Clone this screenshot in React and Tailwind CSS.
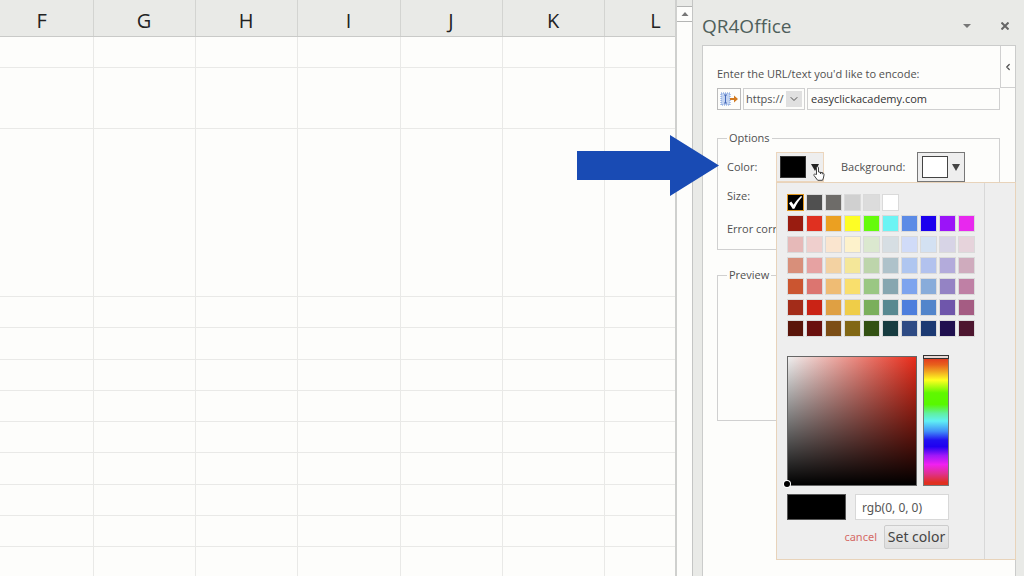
import React, { useState } from 'react';
import { ChevronDown, ChevronLeft } from 'lucide-react';

const columns = [
  { name: 'F', width: 'w-[102px]' },
  { name: 'G', width: 'w-[102px]' },
  { name: 'H', width: 'w-[102px]' },
  { name: 'I', width: 'w-[103px]' },
  { name: 'J', width: 'w-[102px]' },
  { name: 'K', width: 'w-[102px]' },
  { name: 'L', width: 'w-[103px]' },
];

const rows = [
  'h-[31px]', 'h-[61px]', 'h-[168px]', 'h-[31px]', 'h-[32px]', 'h-[31px]', 'h-[31px]',
  'h-[31px]', 'h-[32px]', 'h-[31px]', 'h-[31px]', 'h-[31px]',
];

const greys = ['#000000', '#505050', '#6e6c69', '#d0d0d0', '#dcdcdc', '#ffffff'];

const palette = [
  ['#991c10', '#e03020', '#eba021', '#fdfd25', '#65fb0c', '#6cf4f4', '#5c8be6', '#1b00ee', '#9b14f8', '#e828ee'],
  ['#e6b9b8', '#efcfcd', '#fae5cf', '#fdf2cb', '#dbe8cf', '#d6dee3', '#d0dbf8', '#d3e1f2', '#d7d4e6', '#e6d3db'],
  ['#d88f7a', '#e6a2a2', '#f3d2a2', '#f4e799', '#bdd5ab', '#aec2ca', '#afc6f0', '#b2c2ee', '#b3abdb', '#cfabbd'],
  ['#cb5530', '#dc7570', '#efbc74', '#f9df6d', '#9ac783', '#86a6b0', '#7da4ee', '#88acda', '#9483c4', '#bf80a5'],
  ['#a32c19', '#ca2315', '#dfa043', '#efcd48', '#7aaf5b', '#588991', '#4e7fdd', '#5285cb', '#6f56ab', '#a55c83'],
  ['#5a150a', '#6a100e', '#7c4e16', '#816714', '#325112', '#173c40', '#2e4b84', '#1b3972', '#20104f', '#4d162f'],
];

function Sheet() {
  return (
    <div className="min-w-0 flex-1 overflow-hidden bg-[#fdfdfb]">
      <table className="-ml-[9px] w-[716px] table-fixed border-collapse">
        <thead>
          <tr className="h-9 bg-[#e9eae7]">
            {columns.map((col) => (
              <th
                key={col.name}
                scope="col"
                className={`${col.width} border-r border-b border-r-[#d3d4d1] border-b-[#c9cac8] pt-[7px] text-[20px] leading-7 font-normal text-[#222]`}
              >
                {col.name}
              </th>
            ))}
          </tr>
        </thead>
        <tbody>
          {rows.map((height, i) => (
            <tr key={i} className={height}>
              {columns.map((col) => (
                <td key={col.name} className="border-r border-b border-[#e9e9e7] p-0"></td>
              ))}
            </tr>
          ))}
        </tbody>
      </table>
    </div>
  );
}

function Scrollbar() {
  return (
    <div className="flex w-[18px] shrink-0 flex-col border-r border-l-2 border-r-[#c4c5c4] border-l-[#cfd0ce] bg-[#e9eae7] pt-1.5">
      <button type="button" aria-label="Scroll up" className="flex h-4 items-center justify-center border-y border-[#b4b5b4] bg-[#fdfdfb]">
        <svg className="h-1 w-2" viewBox="0 0 8 4" fill="#777"><path d="M4 0l3.5 4h-7z" /></svg>
      </button>
      <div className="flex-1 bg-[#fdfdfb]"></div>
    </div>
  );
}

function Swatch({ color, selected, onSelect }) {
  return (
    <button
      type="button"
      aria-label={color}
      onClick={() => onSelect(color)}
      style={{ backgroundColor: color }}
      className={`flex h-[17px] w-[17px] items-center justify-center border ${selected ? 'border-[#e0971e]' : 'border-[#dadada]'}`}
    >
      {selected && (
        <svg className="h-[15px] w-[15px]" viewBox="0 0 15 15" fill="#fff">
          <path d="M1 8.2l2.2-1.600 2.400 3.200C7.800 6.200 10.200 3.400 13 1l1.200.8C11 5.400 8.600 9.200 6.600 13.600L4.800 14z" />
        </svg>
      )}
    </button>
  );
}

function ColorPicker({ color, onSelect }) {
  return (
    <div className="absolute top-[182px] right-2 z-10 flex h-[378px] w-60 border border-[#e8d3ba] bg-[#eeeeee] font-['Noto_Sans',sans-serif]">
      <div className="flex w-52 flex-col border-r border-[#d8d8d8] pt-[11px] pl-2.5">
        <div className="flex flex-col gap-1">
          <div className="flex gap-0.5">
            {greys.map((c) => (
              <Swatch key={c} color={c} selected={c === color} onSelect={onSelect} />
            ))}
          </div>
          {palette.map((row, i) => (
            <div key={i} className="flex gap-0.5">
              {row.map((c) => (
                <Swatch key={c} color={c} selected={c === color} onSelect={onSelect} />
              ))}
            </div>
          ))}
        </div>

        <div className="mt-[19px] flex gap-1.5">
          <div className="relative h-[130px] w-[130px] border border-[#666] bg-[linear-gradient(to_top,#000,transparent),linear-gradient(to_right,#eee,#e82c1a)]">
            <span className="absolute -bottom-0.5 -left-1 h-1.5 w-1.5 rounded-full bg-black ring-1 ring-white"></span>
          </div>
          <div className="relative h-[130px] w-[26px] border border-[#777] bg-[linear-gradient(to_bottom,#e03020_0%,#e8601c_6%,#f0a020_11%,#ffff20_18%,#60f800_28%,#58f800_37%,#60f0a0_44%,#60f0f4_50%,#4090f8_58%,#2010f0_65%,#2000f0_70%,#a018f8_77%,#f020f0_84%,#e03090_91%,#e03020_98%)]">
            <span className="absolute -inset-x-px -top-0.5 h-1 border border-[#333] bg-[#e8d8d4]"></span>
          </div>
        </div>

        <div className="mt-2 flex gap-[9px]">
          <div className="h-[26px] w-[59px] border border-[#555] bg-black"></div>
          <input
            aria-label="Color value"
            defaultValue="rgb(0, 0, 0)"
            className="h-[26px] w-[94px] border border-[#d8d8d8] bg-white px-1.5 text-[12px] text-[#555]"
          />
        </div>
        <div className="mt-[5px] flex w-[162px] items-center justify-end gap-[7px]">
          <a href="#cancel" className="text-[11px] leading-4 text-[#d56a66]">cancel</a>
          <button type="button" className="h-6 w-[65px] rounded-xs border border-[#ccc] bg-linear-to-b from-[#eee] to-[#ddd] text-[14px] leading-5 whitespace-nowrap text-[#444]">
            Set color
          </button>
        </div>
      </div>
    </div>
  );
}

function TaskPane() {
  const [color, setColor] = useState('#000000');

  return (
    <aside className="relative flex w-[331px] shrink-0 flex-col bg-[#e9eae7] pr-2 pl-[9px]">
      <header className="flex h-[45px] items-center pt-1.5 pr-[7px]">
        <h1 className="flex-1 text-[19px] leading-6 text-[#4f5f5b]">QR4Office</h1>
        <button type="button" aria-label="Task pane options">
          <svg className="h-1 w-2" viewBox="0 0 8 4" fill="#777"><path d="M0 0h8L4 4z" /></svg>
        </button>
        <button type="button" aria-label="Close" className="ml-[30px]">
          <svg className="h-2 w-2" viewBox="0 0 8 8" stroke="#666" strokeWidth="2"><path d="M.5.5l7 7M7.500.5l-7 7" /></svg>
        </button>
      </header>

      <div className="relative flex-1 border border-b-0 border-[#cbcccb] bg-[#fdfdfb] pt-5 pr-[15px] pl-[14px] text-[11px] leading-4 text-[#505050]">
        <button type="button" aria-label="Collapse" className="absolute top-0 right-0 flex h-[42px] w-[15px] items-center justify-center border-b border-l border-[#d0d0d0]">
          <ChevronLeft className="h-2.5 w-2.5" strokeWidth={3} />
        </button>
        <label htmlFor="url" className="block">Enter the URL/text you'd like to encode:</label>
        <div className="mt-1.5 flex h-[22px] gap-0.5">
          <button type="button" aria-label="Insert from cell" className="flex w-6 items-center justify-center border border-[#bbb]">
            <svg className="h-4 w-[18px]" viewBox="0 0 18 16" fill="none">
              <path d="M1 2h9v12H1z" fill="#c4d5f2" stroke="#6f94d8" strokeDasharray="1 1" />
              <path d="M4 4h3M5.500 4v8M4 12h3" stroke="#4468b8" />
              <path d="M10 7h4V4.500L18 8l-4 3.500V9h-4z" fill="#d27a20" />
            </svg>
          </button>
          <div className="relative w-[62px]">
            <select aria-label="Protocol" className="h-full w-full appearance-none border border-[#d0d0d0] pl-0.5">
              <option>https://</option>
              <option>http://</option>
            </select>
            <span className="pointer-events-none absolute top-[3px] right-[3px] flex h-4 w-4 items-center justify-center bg-[#e0e0e0]">
              <ChevronDown className="h-3 w-3" strokeWidth={2} />
            </span>
          </div>
          <input id="url" defaultValue="easyclickacademy.com" className="min-w-0 flex-1 border border-[#d0d0d0] px-[3px] text-[#333]" />
        </div>

        <fieldset className="mt-5 h-[120px] border border-[#d0d0d0] pl-[9px]">
          <legend className="px-0.5">Options</legend>
          <div className="mt-1.5 flex h-[30px] items-center">
            <span className="w-[49px]">Color:</span>
            <button type="button" aria-label="Color" className="flex h-[30px] w-12 items-center gap-[5px] border border-[#ecd6bd] bg-[#eee] pl-[3px]">
              <span style={{ backgroundColor: color }} className="h-[22px] w-[26px] border border-[#333]"></span>
              <svg className="h-[7px] w-2" viewBox="0 0 8 7" fill="#222"><path d="M0 0h8L4 7z" /></svg>
            </button>
            <span className="ml-[17px] w-[76px]">Background:</span>
            <button type="button" aria-label="Background" className="flex h-[30px] w-12 items-center gap-1 border border-[#777] bg-[#eee] pl-1">
              <span className="h-[22px] w-[26px] border border-[#444] bg-white"></span>
              <svg className="h-[7px] w-2" viewBox="0 0 8 7" fill="#444"><path d="M0 0h8L4 7z" /></svg>
            </button>
          </div>
          <div className="mt-1.5">Size:</div>
          <div className="mt-[17px]">Error correction:</div>
        </fieldset>

        <fieldset className="mt-[17px] h-[154px] border border-[#d0d0d0] pl-[9px]">
          <legend className="px-0.5">Preview</legend>
        </fieldset>
      </div>

      <ColorPicker color={color} onSelect={setColor} />

      {/* pointer hand */}
      <svg className="absolute top-[166px] left-[120px] z-20 h-[15px] w-3" viewBox="0 0 12 15" fill="#fff" stroke="#444" strokeWidth="1">
        <path d="M3.500 8.500V1.700c0-1.400 2-1.400 2 0V6l3.800.7c1.300.3 1.900 1 1.700 2.300l-.6 3-.9 2.300H4.700L1 9.500c-.6-1 .6-2 1.500-1.200z" />
        <path d="M7.500 6v2M9.300 6.500v1.800" />
      </svg>
    </aside>
  );
}

export default function App() {
  return (
    <main className="relative flex h-screen overflow-hidden bg-[#e9eae7] font-['Open_Sans',sans-serif]">
      <Sheet />
      <Scrollbar />
      <TaskPane />
      <svg className="absolute top-[135px] right-[305px] z-30 h-[61px] w-[142px]" viewBox="0 0 142 61" fill="#194bb4">
        <path d="M0 16h93V0l49 30.500L93 61V45H0z" />
      </svg>
    </main>
  );
}
